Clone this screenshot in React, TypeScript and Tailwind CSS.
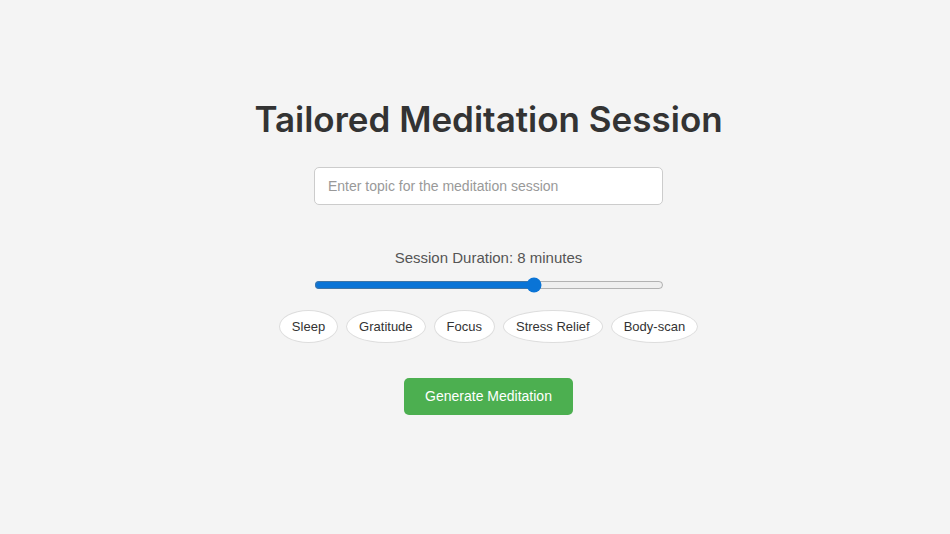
import { useState } from 'react';

const topics = ['Sleep', 'Gratitude', 'Focus', 'Stress Relief', 'Body-scan'];

export default function App() {
  const [duration, setDuration] = useState(8);
  const [topic, setTopic] = useState('');

  return (
    <div className="min-h-screen bg-[#f4f4f4] font-['Liberation_Sans',Arial,sans-serif] text-[#333]">
      <div className="flex flex-col items-center pl-[27px] pt-[99px]">
        <h1 className="font-['Inter',sans-serif] text-[35px] font-semibold leading-[41px] text-[#333]">
          Tailored Meditation Session
        </h1>

        <input
          type="text"
          value={topic}
          onChange={(e) => setTopic(e.target.value)}
          placeholder="Enter topic for the meditation session"
          className="mt-[27px] h-[38px] w-[349px] rounded-[5px] border border-[#ccc] bg-white px-[13px] text-[14px] text-[#333] outline-none placeholder:text-[#999]"
        />

        <label className="mt-[44px] text-[15px] leading-[17px] text-[#555]">
          Session Duration: {duration} minutes
        </label>

        <input
          type="range"
          min={1}
          max={12}
          value={duration}
          onChange={(e) => setDuration(Number(e.target.value))}
          className="mt-[11px] w-[350px] accent-[#0a74d6]"
        />

        <div className="mt-[17px] flex gap-[8px]">
          {topics.map((t) => (
            <button
              key={t}
              onClick={() => setTopic(t)}
              className="h-[33px] rounded-[50%] border border-[#ddd] bg-white px-3 text-[13px] text-[#333]"
            >
              {t}
            </button>
          ))}
        </div>

        <button className="mt-[35px] h-[37px] rounded-[5px] bg-[#4caf50] px-[21px] text-[14px] text-white">
          Generate Meditation
        </button>
      </div>
    </div>
  );
}
